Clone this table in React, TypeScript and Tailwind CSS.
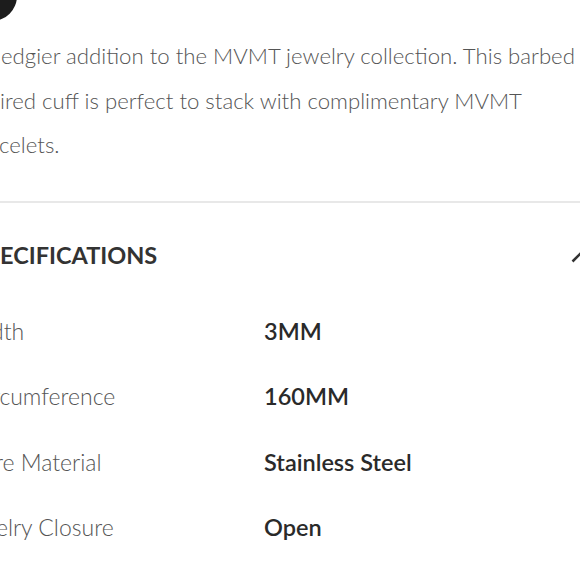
import React, { useMemo } from "react";

const FONT = "Lato, 'Open Sans', sans-serif";

function measure(text: string, font: string): number {
  if (typeof document === "undefined") return 0;
  const c = document.createElement("canvas");
  const ctx = c.getContext("2d");
  if (!ctx) return 0;
  ctx.font = font;
  return ctx.measureText(text).width;
}

type Piece = { prefix: string; rest: string; start: number };

function Clipped({ prefix, rest, start, font, className }: Piece & { font: string; className: string }) {
  const ml = useMemo(() => start - measure(prefix, font), [prefix, start, font]);
  return (
    <div className={className} style={{ marginLeft: ml }}>
      {prefix}
      {rest}
    </div>
  );
}

const rows = [
  { prefix: "Wi", rest: "dth", start: -9, value: "3MM" },
  { prefix: "Cir", rest: "cumference", start: 0, value: "160MM" },
  { prefix: "Co", rest: "re Material", start: -5, value: "Stainless Steel" },
  { prefix: "Jew", rest: "elry Closure", start: -4, value: "Open" },
];

const PARA_FONT = `300 22.2px ${FONT}`;
const LABEL_FONT = `300 23px ${FONT}`;
const HEAD_FONT = `700 23.5px ${FONT}`;

export default function App() {
  return (
    <div className="w-[580px] h-[580px] overflow-hidden bg-white" style={{ fontFamily: FONT }}>
      <div className="w-[50px] h-[50px] rounded-full bg-[#1c1c1c] -ml-[33px] -mt-[29px]" />
      <div className="mt-[13px] text-[22.2px] leading-[44.5px] text-[#555] font-light whitespace-nowrap">
        <Clipped
          font={PARA_FONT}
          className=""
          prefix="An "
          rest="edgier addition to the MVMT jewelry collection. This barbed wire-"
          start={1}
        />
        <Clipped
          font={PARA_FONT}
          className=""
          prefix="insp"
          rest="ired cuff is perfect to stack with complimentary MVMT"
          start={0}
        />
        <Clipped font={PARA_FONT} className="" prefix="bra" rest="celets." start={-1} />
      </div>
      <div className="mt-[33px] h-[2px] bg-[#e8e8e8] w-full" />
      <div className="mt-[37px] flex items-center h-[30px]">
        <Clipped
          font={HEAD_FONT}
          className="text-[23.5px] leading-[30px] font-bold text-[#333] whitespace-nowrap"
          prefix="SP"
          rest="ECIFICATIONS"
          start={0}
        />
        <div className="flex-1" />
        <svg width="22" height="14" viewBox="0 0 22 14" className="-mr-[13px] mt-[2px] shrink-0">
          <polyline points="1.5,12.5 11,3 20.5,12.5" fill="none" stroke="#333" strokeWidth="2.5" />
        </svg>
      </div>
      <div className="mt-[46px] flex flex-col">
        {rows.map((r) => (
          <div key={r.value} className="flex h-[65.5px] items-start whitespace-nowrap leading-[30px]">
            <div className="w-[264px] shrink-0 overflow-hidden">
              <Clipped
                font={LABEL_FONT}
                className="text-[23px] text-[#555] font-light"
                prefix={r.prefix}
                rest={r.rest}
                start={r.start}
              />
            </div>
            <div className="text-[23.5px] text-[#2a2a2a] font-semibold">{r.value}</div>
          </div>
        ))}
      </div>
    </div>
  );
}
